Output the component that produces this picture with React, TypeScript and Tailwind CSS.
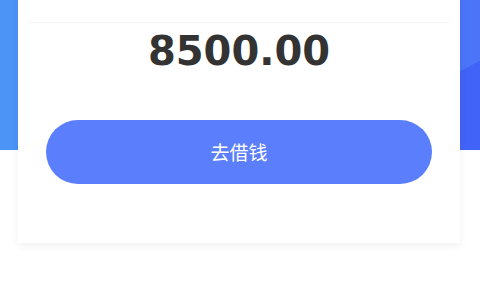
export default function App() {
  return (
    <div className="w-[480px] h-[300px] overflow-hidden bg-white">
      {/* blue header band behind the card */}
      <div className="relative h-[150px] overflow-hidden bg-gradient-to-r from-[#4c95f6] via-[#4a84f7] to-[#4b74f8]">
        <div className="absolute right-[-40px] bottom-[-60px] w-[160px] h-[120px] rotate-[-28deg] bg-[#4263f7]" />
      </div>

      <div className="-mt-[174px] ml-[18px] w-[442px] relative bg-white shadow-[0_3px_8px_rgba(0,0,0,0.06)] pt-[5px] pb-[59px]">
        <div
          className="text-center text-[14px] leading-[20px] text-[#999]"
          style={{ fontFamily: '"Noto Sans CJK SC", sans-serif' }}
        >
          可借额度(元)
        </div>
        <div className="mt-[21px] mx-[10px] h-px bg-[#f4f4f4]" />
        <div
          className="mt-[2px] text-center text-[40px] leading-[52px] font-bold text-[#333333]"
          style={{ fontFamily: '"DejaVu Sans", sans-serif' }}
        >
          8500.00
        </div>
        <div className="mt-[43px] mx-[28px]">
          <button
            className="w-full h-[64px] rounded-full bg-[#5b7efd] text-white text-[19px]"
            style={{ fontFamily: '"Noto Sans CJK SC", sans-serif' }}
          >
            去借钱
          </button>
        </div>
      </div>
    </div>
  );
}
